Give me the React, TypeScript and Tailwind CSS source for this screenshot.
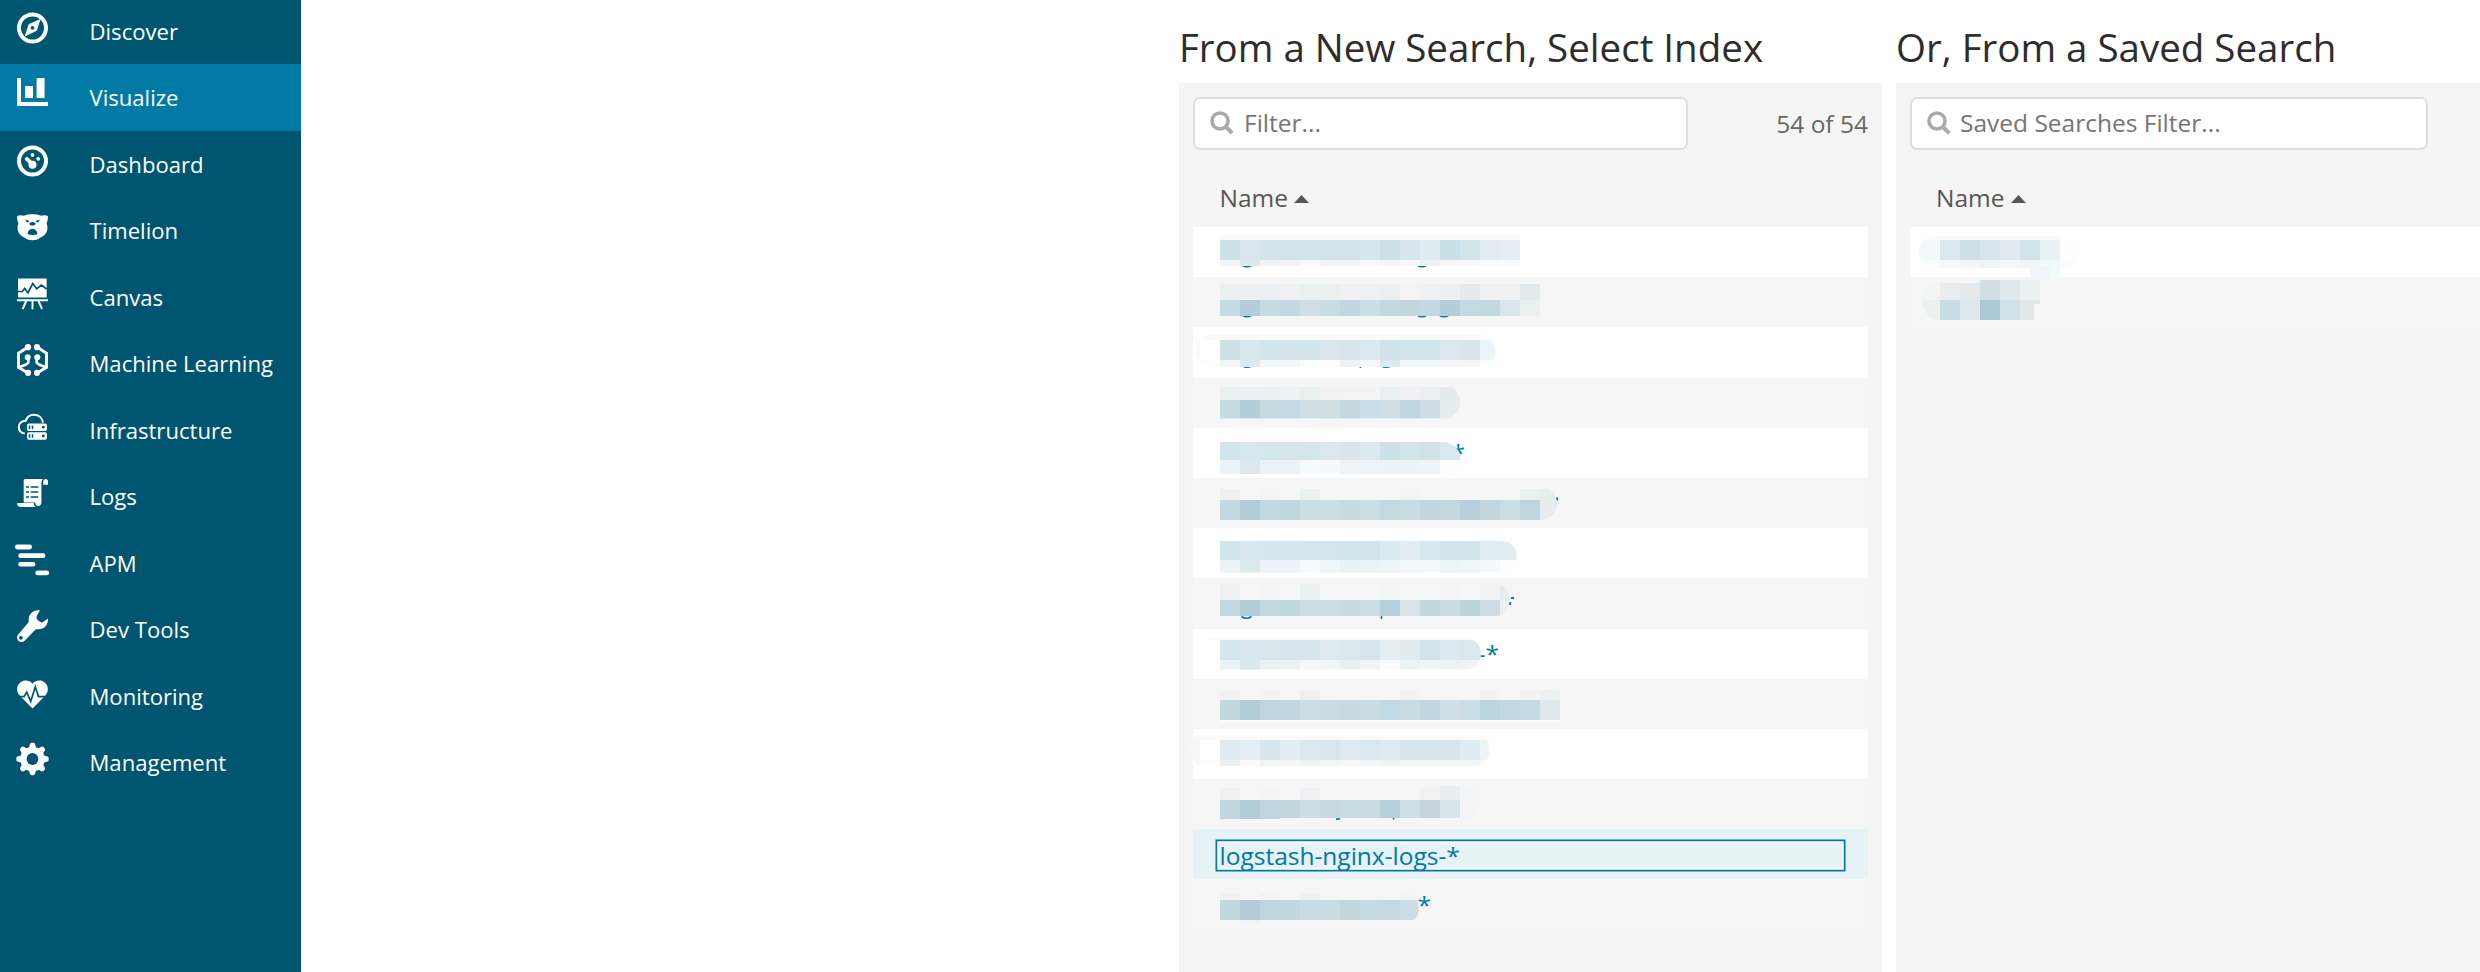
import type { ReactNode } from "react";

const BG = "#005571";

const ring = <circle cx="16.5" cy="16" r="13.5" fill="none" stroke="#fff" strokeWidth="4" />;

const icons: Record<string, ReactNode> = {
  Discover: (
    <>
      {ring}
      <path d="M24 7.7 20.4 18.6 9.3 23.8 13 12.4z" fill="#fff" stroke="#fff" strokeWidth=".8" strokeLinejoin="round" />
      <circle cx="16.5" cy="15.8" r="1.9" fill={BG} />
    </>
  ),
  Visualize: <path d="M1 0h4v24h27v4H1zM9 8h8v12H9zM20.6 0h8v20h-8z" fill="#fff" />,
  Dashboard: (
    <>
      {ring}
      <circle cx="16.5" cy="10" r="1.9" fill="#fff" />
      <circle cx="22.2" cy="13.8" r="1.9" fill="#fff" />
      <path d="m10.8 14 5.5 5" stroke="#fff" strokeWidth="3.8" strokeLinecap="round" />
      <circle cx="16.5" cy="19.7" r="4" fill="#fff" />
    </>
  ),
  Timelion: (
    <>
      <path d="M1.2 5C3 3.8 6 4 8 4.8c2.500-1.200 5.500-1.600 8.500-1.600s6 .4 8.500 1.600c2-.8 5-1 6.800.2.4 3-.3 5.500-1.200 7 .6 2 1 4 .8 6-.6 4.500-3.200 6.800-6.400 8.200-3 2.400-5.500 3-8.500 3s-5.500-.6-8.500-3C4.800 24.800 2.200 22.500 1.600 18c-.2-2 .2-4 .8-6C1.500 10.500.8 8 1.200 5z" fill="#fff" />
      <path d="m9.300 8.500 4 1.600-1.200 1.300c-1.400 0-2.300-.9-2.800-2.900zM23.700 8.500l-4 1.600 1.200 1.300c1.400 0 2.300-.9 2.800-2.900z" fill={BG} />
      <ellipse cx="16.500" cy="12.800" rx="3" ry="1.800" fill={BG} />
      <path d="M11.600 23c.3-3 2-5.200 4.900-5.200s4.600 2.200 4.900 5.200c-1.500.8-3 .9-4.900.9s-3.400-.1-4.900-.9z" fill={BG} />
    </>
  ),
  Canvas: (
    <>
      <path d="M2 .5h28.700v19H2z" fill="#fff" />
      <path d="M2 13.500h4.300l2.400-3 3.300 4.300 4.700-9.300 4 5.300L25.300 7l5.400 4" fill="none" stroke={BG} strokeWidth="1.700" />
      <path d="M1 22.300h31M10.200 23l-3.500 8M16.500 23v8.200M22.500 23l3.500 8" fill="none" stroke="#fff" strokeWidth="1.900" />
    </>
  ),
  "Machine Learning": (
    <g fill="none" stroke="#fff" strokeWidth="3">
      <path d="M12 3 2.500 9.200v14.300L12 29M21 3l9.500 6.200v14.300L21 29" />
      <path d="M12.300 13.500v5.200L10 20.500l-7.500 3M20.700 13.500v5.200l2.300 1.800 7.500 3" strokeWidth="2.600" />
      <g fill="#fff" stroke="none">
        <circle cx="12" cy="3.200" r="3.100" />
        <circle cx="21" cy="3.200" r="3.100" />
        <circle cx="12" cy="28.800" r="3.100" />
        <circle cx="21" cy="28.800" r="3.100" />
        <circle cx="11.700" cy="13.300" r="3" />
        <circle cx="21.300" cy="13.300" r="3" />
      </g>
    </g>
  ),
  Infrastructure: (
    <>
      <path d="M8.700 22.600C5 22 2.800 19.300 2.800 16c0-3.600 3-6.200 7-6.300C11 5.800 14.200 3.700 18 3.700c4.800 0 8.300 3.300 9 8" fill="none" stroke="#fff" strokeWidth="2" />
      <rect x="11" y="12.500" width="20" height="7.500" rx="2" fill="#fff" />
      <rect x="11" y="21.200" width="20" height="7.500" rx="2" fill="#fff" />
      <path d="M13.500 14.500v3.500M16.500 14.500v3.500M13.500 23.200v3.500M16.500 23.200v3.500" stroke={BG} strokeWidth="1.500" />
      <circle cx="27.300" cy="16.200" r="1.400" fill={BG} />
      <circle cx="27.300" cy="25" r="1.400" fill={BG} />
    </>
  ),
  Logs: (
    <>
      <path d="M9 2h18c-1.200 1-1.600 2.500-1.600 5v18.500c0 2-1.300 3.500-3.200 3.500s-3-1.500-3-3.600H7.700V4c0-1 .4-2 1.300-2z" fill="#fff" />
      <path d="M27.300 7.800V4.500c0-1.500 1-2.500 2.400-2.500S32 3 32 4.500v3.300zM1 26h16.700c.2 1.800.8 3 2 4H5c-2.500 0-4-1.500-4-4z" fill="#fff" />
      <path d="M10 10h3M14.700 10h7.600M10 15h3M14.700 15h7.600M10 20h3M14.700 20h7.600" stroke={BG} strokeWidth="1.700" />
    </>
  ),
  APM: (
    <g fill="#fff">
      <rect x="-1" y=".6" width="17" height="4.800" rx="2.400" />
      <rect x="2.200" y="9.300" width="27.300" height="4.800" rx="2.400" />
      <rect x="2.200" y="18" width="17.200" height="4.600" rx="2.300" />
      <rect x="19.300" y="26.500" width="13.800" height="4.700" rx="2.300" />
    </g>
  ),
  "Dev Tools": (
    <>
      <path d="M24 .3C17.500-.8 12.300 4 12.700 10.200c0 1.300-.2 2.200-1 3L2.200 24.500c-1.600 2-1.500 4.500.2 6.200s4.400 1.700 6.300 0L19 20c.8-.8 1.600-1 2.800-.8 6 .6 10.600-4 10.200-10.700l-5 3.400c-1.200.8-2.400.6-3.600-.3l-1.700-1.500c-1.200-1.200-1.400-2.500-1-4z" fill="#fff" />
      <circle cx="4.900" cy="27.800" r="1.900" fill={BG} />
    </>
  ),
  Monitoring: (
    <>
      <path d="M16.500 31.600 3.800 18.800C-.2 14.600.4 8 5 5c3.800-2.500 8.800-1.700 11.500 1.700C19.200 3.300 24.200 2.500 28 5c4.600 3 5.200 9.600 1.200 13.800z" fill="#fff" />
      <path d="M0 19.600h8l2.700-4.400 4 9.300 4.600-14.700 3.200 9.800H33" fill="none" stroke={BG} strokeWidth="1.700" />
    </>
  ),
  Management: (
    <>
      <g fill="#fff">
        <circle cx="16.500" cy="16" r="12.300" />
        {[0, 45, 90, 135, 180, 225, 270, 315].map((a) => (
          <path key={a} d="M12.700 5.500 14 1c.4-1 1-1.200 2.500-1.200S18.600 0 19 1l1.300 4.500z" transform={`rotate(${a} 16.5 16)`} />
        ))}
      </g>
      <circle cx="16.500" cy="16" r="5.900" fill={BG} />
    </>
  ),
};

function Sidebar() {
  return (
    <aside className="h-[972px] w-[301px] shrink-0 overflow-hidden bg-[#005571]">
      <nav className="-mt-[2.5px] flex flex-col">
        {Object.keys(icons).map((name) => (
          <a
            key={name}
            className={`flex h-[66.5px] shrink-0 items-start pl-4 text-white ${name === "Visualize" ? "bg-[#0079a5]" : ""}`}
          >
            <svg className="mt-[14px] size-8 shrink-0 overflow-visible" viewBox="0 0 32 32">
              {icons[name]}
            </svg>
            <span className="ml-[41.5px] mt-[17.4px] text-[22.1px] leading-[32px] whitespace-nowrap">{name}</span>
          </a>
        ))}
      </nav>
    </aside>
  );
}

/* One horizontal band of 20px mosaic cells: start x, top, bottom, cell colours ("-" leaves a gap). */
type Band = [number, number, number, string];
type Blob = { clip: [number, number, number, number, number]; bands: Band[] };

const leftBlobs: Blob[] = [
  {
    clip: [1190, 234, 1530, 266, 3],
    bands: [
      [1220, 234, 240, "fafafa fafafa fafafa fafafa fafafa fafafa fafafa fafafa fafafa fafafa fafafa fafafa fafafa fafafa fafafa"],
      [1220, 240, 260, "cde1e7 d8e6ed d1e5eb d3e5eb d1e4ea d2e4ea d1e4ea d5e6ec cce1e7 d7e6ed e1ebf2 c8e0e9 d1e4e9 e3ebf3 e6eef5"],
      [1220, 260, 266, "eff5f8 dceaf0 edf3f6 f0f4f8 f8fafb edf3f7 edf3f7 f7fafb f3f7f9 f5f9fa eaf2f4 f5f9fa f5f9fa fafbfb fcfcfc"],
    ],
  },
  {
    clip: [1220, 284, 1540, 316, 0],
    bands: [
      [1220, 284, 300, "e9f1f0 edf0f1 e9eff2 f0f1f3 e9f1f0 e9f1f0 f1f1f3 edf1f1 e9f0ef f2f3f2 eef2f3 edf0f1 e5eaed f0f1f3 f0f2f2 e1ebee"],
      [1220, 300, 316, "c4dbe1 b3ced9 c6dae1 c3d9e2 d1dfe5 c9dce2 bfd7df c9dee5 c3d9e0 c1d6dd c3d9df b3cdd9 c4dae3 c2d8df dbe6eb eaf0f0"],
    ],
  },
  {
    clip: [1196, 335, 1495, 367, 16],
    bands: [
      [1180, 335, 360, "f9f9f9"],
      [1200, 335, 340, "fafafa fafafa fafafa fafafa fafafa fafafa fafafa fafafa fafafa fafafa fafafa fafafa fafafa fafafa fafafa"],
      [1220, 340, 360, "cde1e7 d8e6ed d1e5eb d3e5eb d1e5eb dae6eb d7e4ea dae9f0 cfe2ea d2e4eb d0e3eb dbe7ed d9e5eb ebf4f8"],
      [1200, 360, 367, "fdfdfd f2f6f8 dce9ef f3f7f9 f3f7f9 fbfcfd fbfcfd eff3f6 f5f9fb dce9ef f3f7f9 f3f7f9 f3f7f9 f3f6f8 fcfcfc"],
    ],
  },
  {
    clip: [1190, 385.500, 1460, 418.500, 16],
    bands: [
      [1220, 387, 400, "e9f1f0 edf0f1 e9eff2 f0f1f3 e8f0ee f1f2f1 f2f3f2 f2f3f2 e9eef2 f1f1f3 e9eff2 e2ebee"],
      [1220, 400, 418.500, "c4dbe1 b3ced9 c6dae1 c3d9e3 d1dfe5 d1dee2 c6d8df c9dee7 d1dfe5 bfd7de cddfe5 e6edef"],
    ],
  },
  {
    clip: [1190, 442, 1460, 474, 16],
    bands: [
      [1220, 442, 460, "d0e4eb d8e6ed d5e6ed d7e6ed d4e5ec dbe7ed d9e5eb dceaf0 cce1e8 d3e4ea d2e1e8 d8e8ef"],
      [1220, 460, 474, "ecf3f7 dbe9ef ecf2f8 ecf2f8 f6fafb f5f9fb f0f3f6 ecf4f8 ecf3f7 ecf3f7 edf3f6 fbfcfc"],
    ],
  },
  {
    clip: [1190, 487, 1557, 520, 16],
    bands: [
      [1220, 489, 500, "edf2f1 - f2f4f2 - ebf1f1 - - - - f2f4f3 - - - - - ebf0f0 e5eeed"],
      [1220, 500, 520, "c3d9e1 b0cdd9 c0d8e0 bdd7de cbdee5 c9dde3 c7dae1 cbdde4 c3dae3 c8dce3 c0d5df c4d8df b6d0dd c1d5df cadde5 bed5df e6ecf0"],
    ],
  },
  {
    clip: [1190, 541, 1516.500, 572.500, 14],
    bands: [
      [1220, 541, 560, "d0e4eb d8e6ed d5e6ed d7e6ed d4e5ec d5e5ec d1e5ed d1e3ea dbeaf0 e1edf3 d6e8ef d2e4ea d2e4ea e2edf3 e2edf3"],
      [1220, 560, 572.500, "ecf3f7 dbe9ef ecf2f8 ecf2f8 f6fafb eff5f8 e8f1f5 e9f2f6 edf4f7 f2f7f9 f4f8fa edf4f7 f0f5f7 f5f8fc fefefe"],
    ],
  },
  {
    clip: [1190, 584, 1509.500, 616, 14],
    bands: [
      [1220, 584, 600, "edf2f1 - f2f4f2 - ebf0f1 - - - f2f4f2 - - f2f4f2 - f1f3f2 e5edef"],
      [1220, 600, 616, "c3d9e1 b0cdd9 c0d8e0 bdd7de cadde4 cbdde4 c7dbe1 c9dde5 b5d0dd d7e4ea bfd7df cadce2 bad4df cddde5 ebf0f1"],
    ],
  },
  {
    clip: [1190, 638, 1481, 669.500, 15],
    bands: [
      [1210, 638, 640, "fafafa fafafa fafafa fafafa fafafa fafafa fafafa fafafa fafafa fafafa fafafa fafafa fafafa"],
      [1220, 640, 660, "d5e6ed d9e6ed d9e6ec d8e5ec d6e5ec dfeaf0 dbe7ed d6e5ec e5eff2 e1ecf1 d2e4eb dde9f0 dae7ed dae7ed"],
      [1220, 660, 669.500, "e9f3f6 d9e8ee ebf1f4 ebf2f5 f5f9f9 f0f5f8 e8f0f3 eff5f8 fafbfc ecf3f7 eff5f8 ecf3f7 edf3f7 edf3f7"],
    ],
  },
  {
    clip: [1220, 690, 1560, 722, 3],
    bands: [
      [1220, 690, 700, "f0f1f2 - f2f4f3 - eff0f2 - - - - f2f4f2 - - - f2f4f3 - f2f4f2 ecf0f0"],
      [1220, 700, 720, "c0d7de b0cdd8 bfd6de c0d7df cbdee3 cadce2 c7dae1 c9dce2 c2dae3 c8dce3 c1d5df d0dfe7 c9dde4 bad5db c3d9e2 c5d9e3 dfe8eb"],
      [1220, 720, 722, "fbfbfb fbfbfb fbfbfb fbfbfb fbfbfb fbfbfb fbfbfb fbfbfb fbfbfb fbfbfb fbfbfb fbfbfb fbfbfb fbfbfb fbfbfb fbfbfb fbfbfb"],
    ],
  },
  {
    clip: [1190, 734, 1489, 766, 14],
    bands: [
      [1180, 734, 766, "f7f7f7"],
      [1200, 735, 740, "fafafa fafafa fafafa fafafa fafafa fafafa fafafa fafafa fafafa fafafa fafafa fafafa fafafa fafafa fafafa"],
      [1220, 740, 760, "dfeaf1 e5edf5 d7e6ed e2edf2 dbe8ee d8e6ee dfeaf0 d9e8f0 dfeaf0 d7e6ed d7e6ed d9e5ec dfecf2 edf4f6"],
      [1200, 760, 766, "fdfdfd e8f1f4 f8fafc eff5f7 f2f6f8 ebf3f6 f0f5f8 f4f8fa f2f6f8 edf3f7 f2f6f8 f2f6f8 f2f6f8 eff5f8 fafbfb"],
    ],
  },
  {
    clip: [1190, 786, 1480, 819, 16],
    bands: [
      [1460, 786, 819, "f2f4f5"],
      [1220, 788, 800, "f0f1f2 - f3f5f4 - eff0f3 - - - - - f2f2f2"],
      [1440, 786, 800, "e7eef1"],
      [1220, 800, 819, "c0d7df b0cdd8 bfd6de"],
      [1280, 800, 818, "c0d7df cbdee3 c7dae0 c8dce4 cadce3 b7d0dc cfdfe7 c3d4dd d7e4ea"],
    ],
  },
  {
    clip: [1190, 893, 1418.500, 924, 14],
    bands: [
      [1220, 893, 900, "f0f1f2 - f3f3f3 - eff0f2 - - - - f1f3f4"],
      [1220, 900, 920, "c0d7de b5cdda bfd6de c0d7df c8dce6 c9dce4 c1d5dd c5dbe4 c4d9e1 ccdce5"],
      [1240, 920, 924, "f2f3f4"],
    ],
  },
];

const rightBlobs: Blob[] = [
  {
    clip: [1919, 236, 2078, 268, 16],
    bands: [
      [1920, 236, 240, "fafafa fafafa fafafa fafafa fafafa fafafa fafafa"],
      [1900, 240, 260, "f3f8f8 f3f8f8 d8e8ee cde0e7 d4e5ec e1eaf1 d0e3eb e8f1f4 fefefe"],
      [1920, 260, 268, "fbfcfc f4f9f9 f2f7f9 eef5f8 f3f7f9 f0f5f8 f3f8fa fcfcfc"],
    ],
  },
  { clip: [2030, 266, 2060, 280, 0], bands: [[2030, 266, 280, "f0f5f9 f3f8f9"]] },
  {
    clip: [1923, 280, 2052, 320, 17],
    bands: [
      [1920, 283, 300, "f3f5f4 eaedef e4eaec"],
      [1980, 280, 300, "d1e0e7 dfe8ea ebf1f0"],
      [1920, 300, 320, "ecf0f0 c9dce3 dfe7ee abc9d5 d1e1e9"],
    ],
  },
  { clip: [2020, 300, 2034, 320, 0], bands: [[2020, 300, 320, "e0e8eb"]] },
  { clip: [2030, 300, 2040, 304, 0], bands: [[2030, 300, 304, "e0e8eb"]] },
];

function Mosaic({ blobs, x, width, children }: { blobs: Blob[]; x: number; width: number; children?: ReactNode }) {
  return (
    <svg
      className="pointer-events-none absolute top-0 left-0 h-[705px] overflow-visible"
      width={width}
      viewBox={`${x} 227 ${width} 705`}
      shapeRendering="crispEdges"
    >
      {children}
      {blobs.map(({ clip: [x0, y0, x1, y1, r], bands }, i) => (
        <g key={i}>
          <clipPath id={`blob-${x}-${i}`}>
            <rect x={x0} y={y0} width={x1 - x0} height={y1 - y0} rx={r} />
          </clipPath>
          <g clipPath={`url(#blob-${x}-${i})`}>
            {bands.flatMap(([bx, top, bottom, cells], b) =>
              cells.split(" ").map((c, k) =>
                c === "-" ? null : (
                  <rect key={`${b}-${k}`} x={bx + k * 20} y={top} width="20" height={bottom - top} fill={`#${c}`} />
                ),
              ),
            )}
          </g>
        </g>
      ))}
    </svg>
  );
}

function Descenders() {
  return (
    <g fill="none" stroke="#0079a5" strokeWidth="1.600" shapeRendering="auto">
      {[
        [1247, 266],
        [1422, 266],
        [1247, 316],
        [1422, 316],
        [1444, 316],
        [1247, 366.500],
        [1386, 366.500],
        [1246.500, 617.500],
      ].map(([cx, cy]) => (
        <path key={`${cx}-${cy}`} d={`M${cx - 5} ${cy - 1}q5 3.400 10 0`} />
      ))}
      <path d="M1360.500 366v2M1360.500 416v2M1381.500 614v5M1393.500 816v3.500M1340 818.500q-2 1-4 .5" />
      <path d="M1557 497.500v3M1511 598h3M1510 602v3" strokeWidth="2.200" />
    </g>
  );
}

function SearchIcon() {
  return (
    <svg className="size-6 shrink-0" viewBox="0 0 24 24" fill="none" stroke="#aaa" strokeWidth="3.600">
      <circle cx="10" cy="10" r="8" />
      <path d="m15.800 15.800 6.400 6.400" strokeWidth="4" />
    </svg>
  );
}

function FilterBox({ text, className, textClass }: { text: string; className: string; textClass: string }) {
  return (
    <div className={`flex h-[53px] items-center rounded-[7px] border-2 border-[#dedede] bg-white pl-[15px] ${className}`}>
      <span className="-mt-[2px]">
        <SearchIcon />
      </span>
      <span className={`-mt-[2px] text-[24.5px] leading-[34px] text-[#757575] ${textClass}`}>{text}</span>
    </div>
  );
}

function TableHead({ className }: { className: string }) {
  return (
    <div className={`flex h-[61px] items-center border-t border-[#f7f7f7] bg-[#f5f5f5] text-[24.5px] text-[#555] ${className}`}>
      <span className="mt-[1px] leading-[34px]">Name</span>
      <svg className="mt-[3px] ml-[6px] h-2 w-[15px]" viewBox="0 0 15 8">
        <path d="M7.500 0 15 8H0z" fill="#555" />
      </svg>
    </div>
  );
}

const names: Record<number, { text: string; className: string }> = {
  4: { text: "*", className: "pl-[258.5px]" },
  8: { text: "-*", className: "pl-[284.5px]" },
  13: { text: "*", className: "pl-[224.5px]" },
};

function Row({ i }: { i: number }) {
  if (i === 12) {
    return (
      <div className="flex h-[50.2px] items-center bg-[#e6f2f6] pr-[26px] pl-[25.5px]">
        <a className="mt-[3px] h-[25px] flex-1 pl-px text-[24.5px] leading-[25px] text-[#0079a5] shadow-[0_0_0_1.750px_#fff,0_0_0_3.500px_#0079a5]">
          logstash-nginx-logs-*
        </a>
      </div>
    );
  }
  const name = names[i];
  return (
    <div className={`flex h-[50.2px] items-center ${i % 2 ? "bg-[#f6f6f6]" : "bg-white"}`}>
      {name && <a className={`text-[24.5px] leading-[34px] text-[#0079a5] ${name.className}`}>{name.text}</a>}
    </div>
  );
}

export default function App() {
  return (
    <div className="flex h-[972px] w-[2480px] overflow-hidden bg-white font-['Open_Sans',sans-serif]">
      <Sidebar />
      <main className="flex flex-1 gap-[14px] overflow-hidden pl-[878px]">
        <section className="flex w-[703px] shrink-0 flex-col">
          <h2 className="h-[83px] pt-[20px] text-[38.5px] leading-[54px] whitespace-nowrap text-[#2d2d2d]">
            From a New Search, Select Index
          </h2>
          <div className="flex-1 bg-[#f5f5f5] px-[14px] pt-[14px]">
            <div className="flex items-center justify-between">
              <FilterBox text="Filter..." className="w-[495px]" textClass="ml-[10px]" />
              <span className="text-[24.5px] leading-[34px] text-[#666]">54 of 54</span>
            </div>
            <div className="mt-[16px]">
              <TableHead className="pl-[26.5px]" />
              <div className="relative">
                {Array.from({ length: 14 }, (_, i) => (
                  <Row key={i} i={i} />
                ))}
                <Mosaic blobs={leftBlobs} x={1193} width={675}>
                  <Descenders />
                </Mosaic>
              </div>
            </div>
          </div>
        </section>
        <section className="flex w-[703px] shrink-0 flex-col">
          <h2 className="h-[83px] pt-[20px] text-[38.5px] leading-[54px] whitespace-nowrap text-[#2d2d2d]">
            Or, From a Saved Search
          </h2>
          <div className="flex-1 bg-[#f5f5f5] px-[14px] pt-[14px]">
            <FilterBox text="Saved Searches Filter..." className="w-[518px]" textClass="ml-[9px]" />
            <div className="mt-[16px]">
              <TableHead className="pl-[26px]" />
              <div className="relative">
                <Row i={0} />
                <Row i={1} />
                <Mosaic blobs={rightBlobs} x={1910} width={570} />
              </div>
            </div>
          </div>
        </section>
      </main>
    </div>
  );
}
